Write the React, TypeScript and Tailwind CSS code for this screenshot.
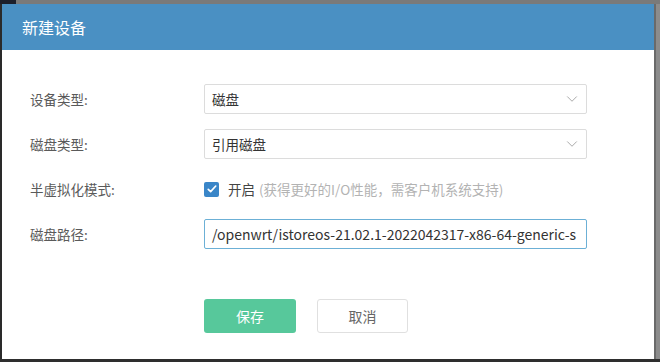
import { ChevronDown } from "lucide-react";

const font = { fontFamily: '"Noto Sans CJK SC", "Liberation Sans", sans-serif' };

function Row({ label, children }: { label: string; children: React.ReactNode }) {
  return (
    <div className="flex items-center h-[30px]">
      <div className="w-[202px] pl-[28px] text-[13.5px] text-[#5a5a5a]">{label}</div>
      <div className="flex-1">{children}</div>
    </div>
  );
}

function Select({ value }: { value: string }) {
  return (
    <div className="w-[383px] h-[30px] border border-[#dcdcdc] rounded-[2px] flex items-center justify-between pl-[7px] pr-[5px]">
      <span className="text-[13.5px] text-[#333]">{value}</span>
      <ChevronDown className="w-[18px] h-[18px] text-[#a0a0a0]" strokeWidth={1.2} />
    </div>
  );
}

export default function App() {
  return (
    <div className="w-[660px] h-[362px] bg-[#7d7d7d] flex flex-col overflow-hidden" style={font}>
      {/* top strip */}
      <div className="h-[4px] flex shrink-0">
        <div className="w-[16px] bg-[#1c1f2b]" />
        <div className="flex-1 bg-[#7a7a7a]" />
      </div>
      <div className="flex flex-1">
        <div className="w-[2px] bg-[#2a2a2a]" />
        {/* dialog */}
        <div className="w-[652px] bg-white flex flex-col">
          <div className="h-[46px] bg-[#4a90c3] flex items-center pl-[20px]">
            <span className="text-[16px] text-white">新建设备</span>
          </div>
          <div className="flex flex-col pt-[34px] gap-[15px]">
            <Row label="设备类型:">
              <Select value="磁盘" />
            </Row>
            <Row label="磁盘类型:">
              <Select value="引用磁盘" />
            </Row>
            <Row label="半虚拟化模式:">
              <div className="flex items-center">
                <div className="w-[15px] h-[15px] rounded-[2px] bg-[#3a86c8] flex items-center justify-center">
                  <svg viewBox="0 0 16 16" className="w-[12px] h-[12px]">
                    <path d="M3 8.5l3.2 3L13 4" fill="none" stroke="white" strokeWidth="2.2" strokeLinecap="round" strokeLinejoin="round" />
                  </svg>
                </div>
                <span className="ml-[9px] text-[13.5px] text-[#444]">开启</span>
                <span className="ml-[4px] text-[13.5px] text-[#b3b3b3]">(获得更好的I/O性能，需客户机系统支持)</span>
              </div>
            </Row>
            <Row label="磁盘路径:">
              <div className="w-[383px] h-[30px] border border-[#6cb0d6] rounded-[2px] flex items-center pl-[7px] overflow-hidden">
                <span className="text-[14px] text-[#333] whitespace-nowrap">/openwrt/istoreos-21.02.1-2022042317-x86-64-generic-s</span>
              </div>
            </Row>
          </div>
          <div className="flex pl-[202px] pt-[50px] gap-[21px]">
            <button className="w-[92px] h-[34px] rounded-[3px] bg-[#57c89b] text-white text-[14px]">保存</button>
            <button className="w-[91px] h-[34px] rounded-[3px] bg-white border border-[#e0e0e0] text-[#666] text-[14px]">取消</button>
          </div>
        </div>
        <div className="flex-1 flex">
          <div className="w-[2px] bg-[#6a6a6a]" />
          <div className="flex-1 bg-[#8c8c8c]" />
        </div>
      </div>
      <div className="h-[3px] bg-[#2e2e2e] shrink-0" />
    </div>
  );
}
